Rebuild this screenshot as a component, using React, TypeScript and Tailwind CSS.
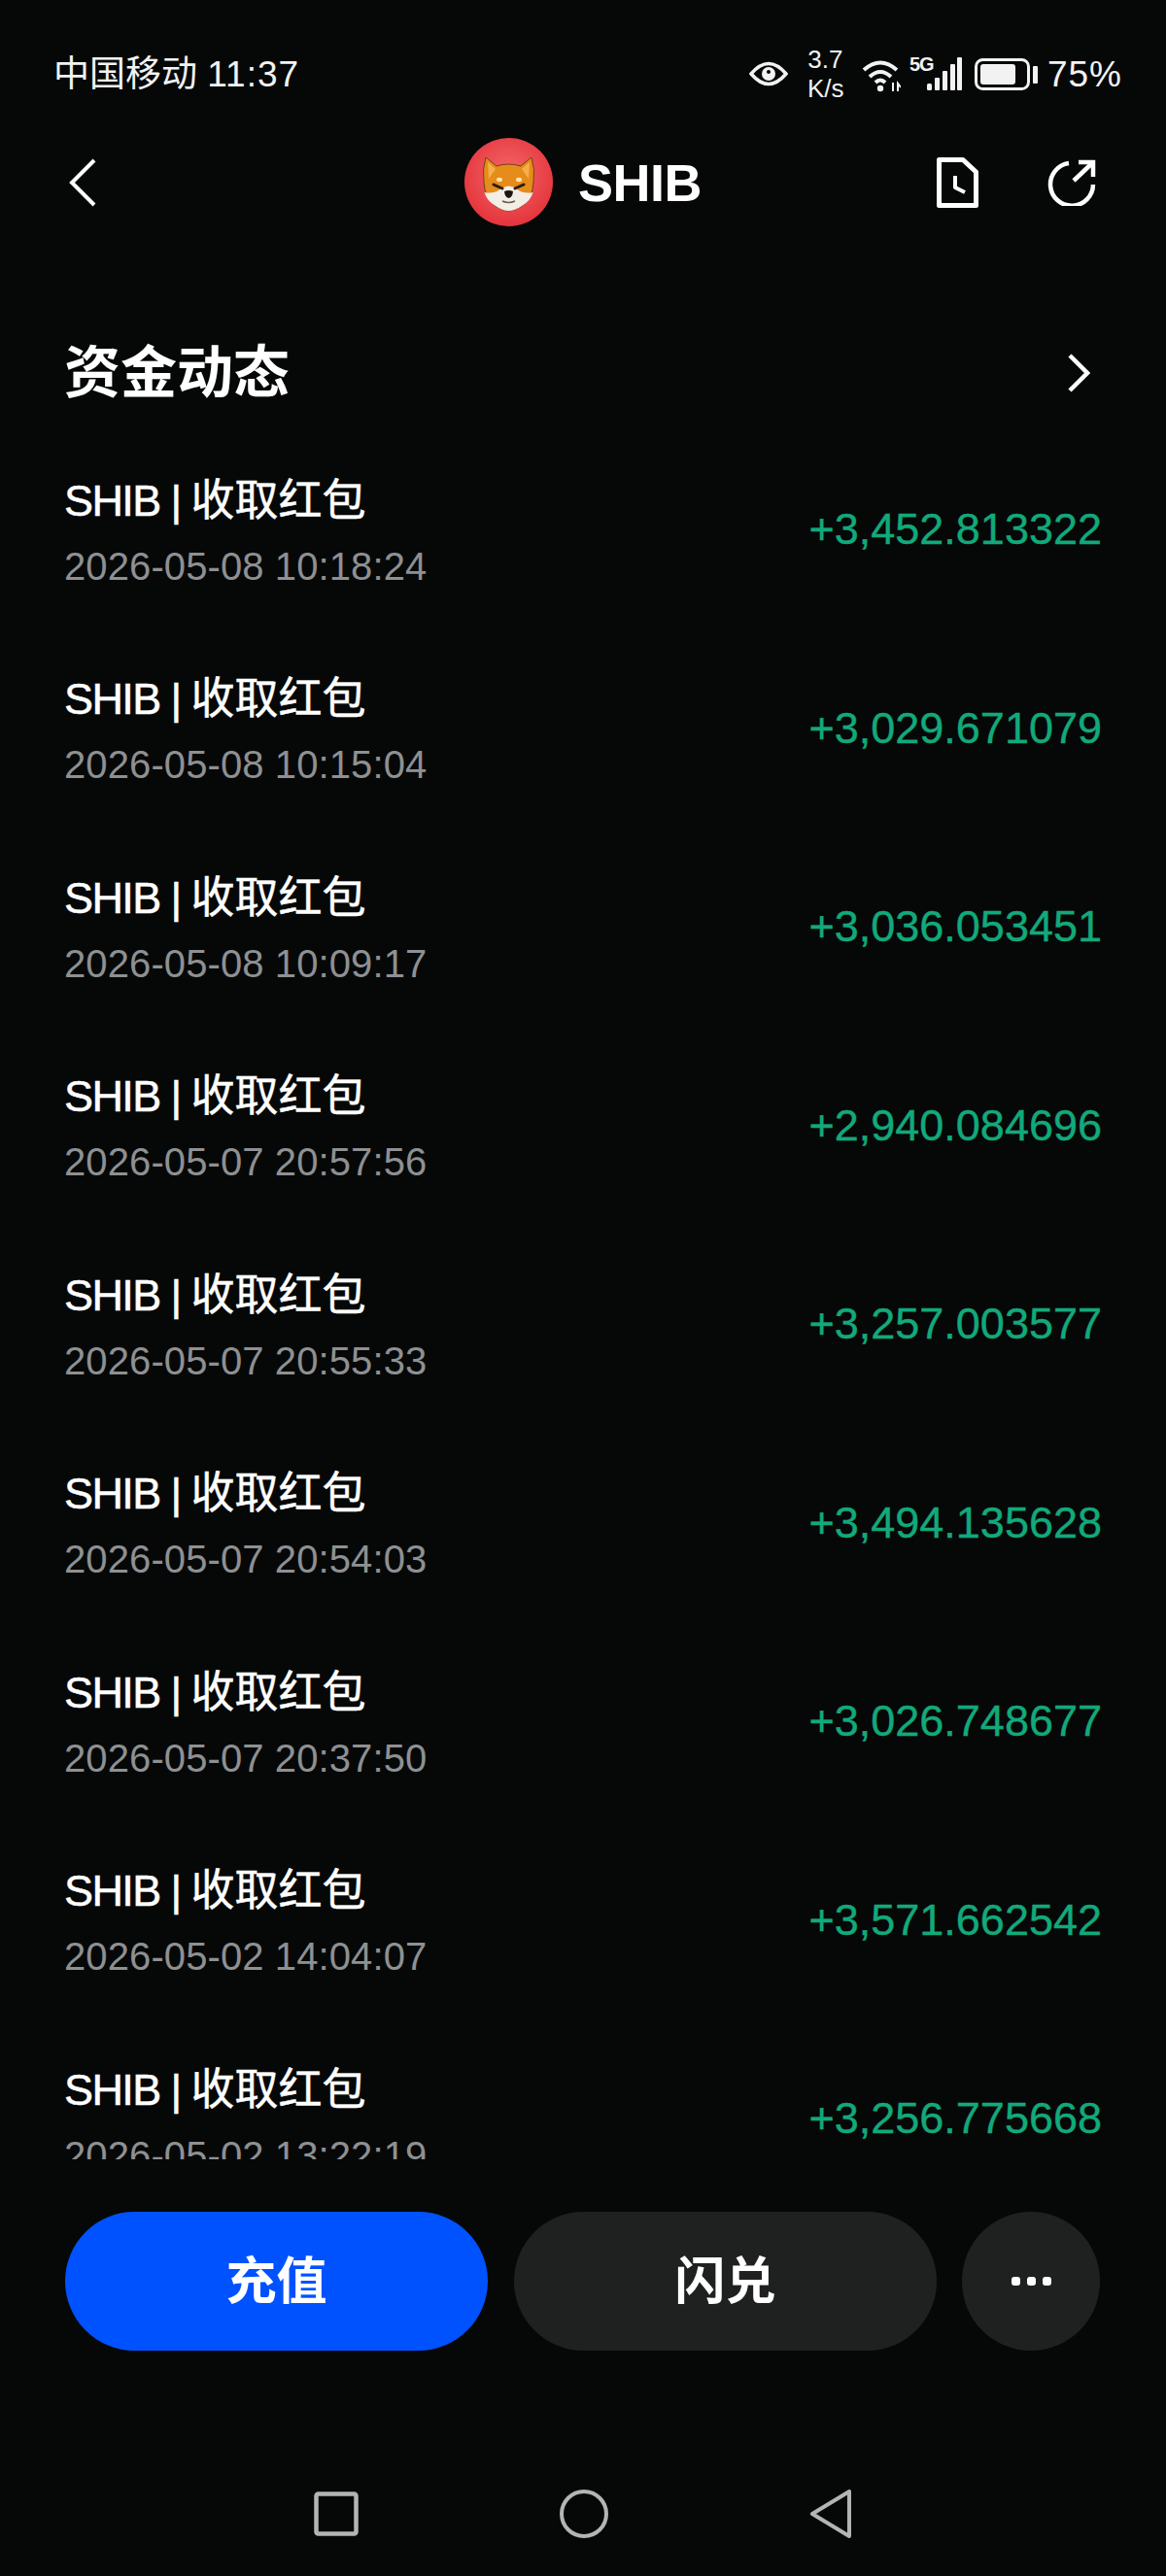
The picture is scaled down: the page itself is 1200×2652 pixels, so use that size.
import React from 'react';

const FONT = "font-['Liberation_Sans','Noto_Sans_CJK_SC',sans-serif]";

const records = [
  { time: '2026-05-08 10:18:24', amount: '+3,452.813322' },
  { time: '2026-05-08 10:15:04', amount: '+3,029.671079' },
  { time: '2026-05-08 10:09:17', amount: '+3,036.053451' },
  { time: '2026-05-07 20:57:56', amount: '+2,940.084696' },
  { time: '2026-05-07 20:55:33', amount: '+3,257.003577' },
  { time: '2026-05-07 20:54:03', amount: '+3,494.135628' },
  { time: '2026-05-07 20:37:50', amount: '+3,026.748677' },
  { time: '2026-05-02 14:04:07', amount: '+3,571.662542' },
  { time: '2026-05-02 13:22:19', amount: '+3,256.775668' },
];

const ShibLogo = () => (
  <svg width="91" height="91" viewBox="0 0 91 91">
    <defs>
      <radialGradient id="shibBg" cx="50%" cy="42%" r="58%">
        <stop offset="0%" stopColor="#f4686c" />
        <stop offset="100%" stopColor="#e4343b" />
      </radialGradient>
    </defs>
    <circle cx="45.5" cy="45.5" r="45.5" fill="url(#shibBg)" />
    {/* head */}
    <path d="M22 20 L33 29 Q45.5 25 58 29 L69 20 Q73 32 71 46 Q70 63 59 70 Q52 75 45.5 75 Q39 75 32 70 Q21 63 20 46 Q18 32 22 20Z" fill="#e58c1b" stroke="#6e4212" strokeWidth="1" />
    <path d="M24 25 L32 32 L25 42Z" fill="#f3b04c" />
    <path d="M67 25 L59 32 L66 42Z" fill="#f3b04c" />
    {/* white muzzle */}
    <path d="M20.5 56 Q31 58 38 52 Q45.5 47 53 52 Q60 58 70.5 56 Q68 65 59 70 Q52 75 45.5 75 Q39 75 32 70 Q23 65 20.5 56Z" fill="#f2eee6" />
    <ellipse cx="36" cy="43" rx="3" ry="2.2" fill="#fbe3a8" />
    <ellipse cx="56" cy="43" rx="3" ry="2.2" fill="#fbe3a8" />
    {/* eyes */}
    <path d="M30 48 L39 52" stroke="#2c1c10" strokeWidth="3" strokeLinecap="round" />
    <path d="M61 48 L52 52" stroke="#2c1c10" strokeWidth="3" strokeLinecap="round" />
    {/* nose */}
    <path d="M41 55 Q45.5 53 50 55 Q49.5 61 45.5 62 Q41.5 61 41 55Z" fill="#1d1512" />
    <path d="M39 65 Q45.5 68 52 65" stroke="#6b5b50" strokeWidth="1.6" fill="none" />
  </svg>
);

const StatusBar = () => (
  <div className="h-[72px] mt-[40px] pl-[55px] pr-[45px] flex items-center justify-between text-[#f2f2f2]">
    <span className="text-[37px] leading-none whitespace-pre">
      中国移动 <span className="tracking-[1px]">11:37</span>
    </span>
    <div className="flex items-center">
      <svg width="40" height="26" viewBox="0 0 40 26" className="mr-[20px]">
        <path d="M2 13 Q20 -8 38 13 Q20 34 2 13Z" fill="none" stroke="currentColor" strokeWidth="3.5" />
        <circle cx="20" cy="13" r="7" fill="currentColor" />
        <circle cx="20" cy="11" r="2" fill="#060808" />
      </svg>
      <div className="w-[37px] mr-[19px] text-[26px] leading-[30px] text-center whitespace-nowrap">
        <div>3.7</div>
        <div>K/s</div>
      </div>
      <svg width="40" height="34" viewBox="0 0 40 34" fill="none" stroke="currentColor" strokeWidth="4" className="mt-[3px]">
        <path d="M2 11 Q19 -4 36 11" />
        <path d="M8 18 Q19 8 30 18" />
        <path d="M14 24 Q19 19 24 24" />
        <circle cx="19" cy="30" r="3.2" fill="currentColor" stroke="none" />
        <path d="M32 24 V33 M37 33 V25 L40 29" strokeWidth="2" />
      </svg>
      <div className="relative w-[54px] h-[34px] ml-[9px] mr-[13px]">
        <span className="absolute left-0 top-[-4px] text-[20px] leading-[22px] font-bold tracking-[-1px]">5G</span>
        <svg width="36" height="34" viewBox="0 0 36 34" className="absolute right-0 top-0" fill="currentColor">
          <rect x="0" y="27" width="5" height="7" rx="1.5" />
          <rect x="8" y="21" width="5" height="13" rx="1" />
          <rect x="16" y="14" width="5" height="20" rx="1" />
          <rect x="24" y="7" width="5" height="27" rx="1" />
          <rect x="31" y="0" width="5" height="34" rx="1" />
        </svg>
      </div>
      <svg width="66" height="33" viewBox="0 0 66 33" className="mr-[9px]">
        <rect x="1.5" y="1.5" width="54" height="30" rx="7" fill="none" stroke="currentColor" strokeWidth="3" />
        <rect x="6" y="6" width="36" height="21" rx="3" fill="currentColor" />
        <rect x="60" y="8" width="5" height="18" rx="1" fill="currentColor" />
      </svg>
      <span className="text-[37px] leading-none tracking-[1px]">75%</span>
    </div>
  </div>
);

const Header = () => (
  <div className="h-[112px] mt-[20px] grid grid-cols-3 items-center text-white">
    <div className="pl-[71px]">
      <svg width="28" height="50" viewBox="0 0 28 50" fill="none" stroke="currentColor" strokeWidth="4">
        <path d="M26 2 L3 25 L26 48" />
      </svg>
    </div>
    <div className="flex items-center justify-center gap-[26px]">
      <div className="mt-[-2px]">
        <ShibLogo />
      </div>
      <span className="text-[54px] font-bold leading-none tracking-[-0.5px]">SHIB</span>
    </div>
    <div className="flex items-center justify-end pr-[72px] gap-[71px]">
      <svg width="43" height="52" viewBox="0 0 43 52" fill="none" stroke="currentColor" strokeWidth="5" strokeLinejoin="round">
        <path d="M2.5 2.5 H27 L40.5 15 V49.5 H2.5Z" />
        <path d="M19 19 V31 L29 36" strokeWidth="4" />
      </svg>
      <svg width="50" height="48" viewBox="0 0 50 48" fill="none" stroke="currentColor" strokeWidth="4.5">
        <path d="M47 26 A22 22 0 1 1 22 4" />
        <path d="M27 22 L46 4" />
        <path d="M32 3 H47 V18" />
      </svg>
    </div>
  </div>
);

const RecordRow = ({ time, amount }: { time: string; amount: string }) => (
  <div className="h-[204.5px] flex items-center justify-between shrink-0">
    <div className="mt-[10px]">
      <div className="text-white text-[45px] leading-[52px] mb-[15px] whitespace-pre [-webkit-text-stroke:0.5px_white]">
        <span className="tracking-[-1.6px]">SHIB | </span>收取红包
      </div>
      <div className="text-[#8e9092] text-[40px] leading-[52px] tracking-[0.1px]">{time}</div>
    </div>
    <div className="text-[#12a97b] text-[45px] leading-none mt-[1px] [-webkit-text-stroke:0.4px_#12a97b]">{amount}</div>
  </div>
);

export default function App() {
  return (
    <div className={`${FONT} w-[1200px] h-[2652px] bg-[#060808] flex flex-col overflow-hidden`}>
      <StatusBar />
      <Header />

      <div className="mt-[100px] h-[80px] pl-[66px] pr-[78px] flex items-center justify-between">
        <h2 className="text-white text-[58px] font-bold leading-none">资金动态</h2>
        <svg width="24" height="40" viewBox="0 0 24 40" fill="none" stroke="white" strokeWidth="4.5">
          <path d="M3 2 L21 20 L3 38" />
        </svg>
      </div>

      <div className="mt-[18px] h-[1781px] px-[66px] overflow-hidden flex flex-col">
        {records.map((r) => (
          <RecordRow key={r.time} time={r.time} amount={r.amount} />
        ))}
      </div>

      <div className="mt-[54px] pl-[67px] pr-[68px] flex gap-[26px]">
        <button className="w-[435px] h-[143px] rounded-full bg-[#0052ff] text-white text-[52px] font-bold">充值</button>
        <button className="w-[435px] h-[143px] ml-[1px] rounded-full bg-[#1f2121] text-white text-[52px] font-bold">闪兑</button>
        <button className="w-[142px] h-[143px] rounded-full bg-[#1f2121] flex items-center justify-center gap-[7px]">
          <span className="w-[9px] h-[9px] rounded-[3px] bg-white" />
          <span className="w-[9px] h-[9px] rounded-[3px] bg-white" />
          <span className="w-[9px] h-[9px] rounded-[3px] bg-white" />
        </button>
      </div>

      <div className="mt-[143px] flex items-center justify-center gap-[207px] text-[#b4b4b4]">
        <svg width="46" height="46" viewBox="0 0 46 46" fill="none" stroke="currentColor" strokeWidth="4.5">
          <rect x="2.5" y="2.5" width="41" height="41" rx="2" />
        </svg>
        <svg width="50" height="50" viewBox="0 0 50 50" fill="none" stroke="currentColor" strokeWidth="4">
          <circle cx="25" cy="25" r="23" />
        </svg>
        <svg width="44" height="50" viewBox="0 0 44 50" fill="none" stroke="currentColor" strokeWidth="4" strokeLinejoin="round">
          <path d="M41 2 V48 L3 25Z" />
        </svg>
      </div>
    </div>
  );
}
